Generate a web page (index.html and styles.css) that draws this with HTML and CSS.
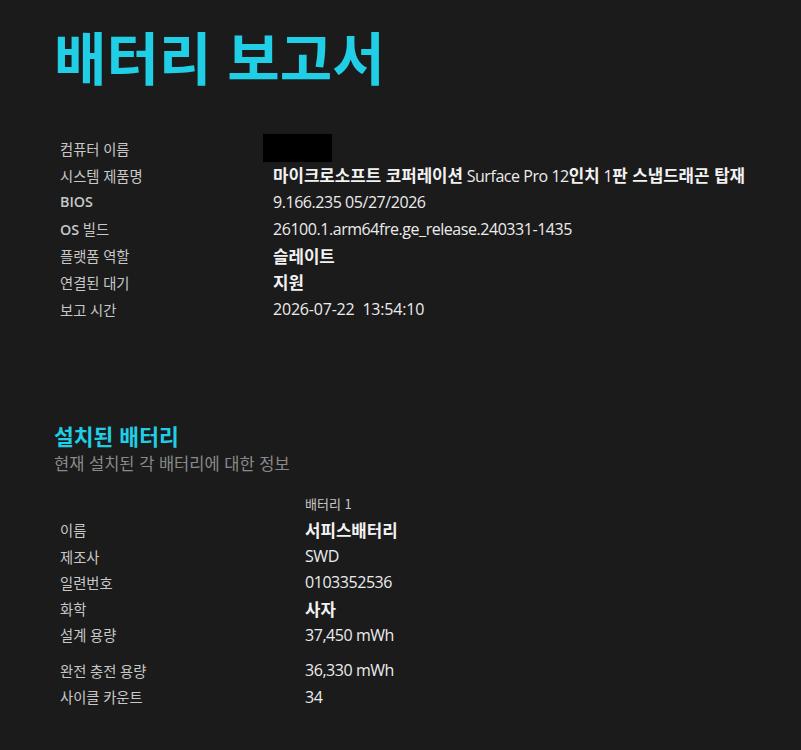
FILE: index.html
```html
<!DOCTYPE html>
<html lang="ko">
<head>
<meta charset="utf-8">
<link rel="stylesheet" href="styles.css">
</head>
<body>
<main class="page">
  <h1 class="title">배터리 보고서</h1>

  <section class="info">
    <div class="lbl">컴퓨터 이름</div><div class="val"><span class="redact"></span></div>
    <div class="lbl">시스템 제품명</div><div class="val"><b>마이크로소프트 코퍼레이션</b> Surface Pro 12<b>인치</b> 1<b>판 스냅드래곤 탑재</b></div>
    <div class="lbl"><span class="latin">BIOS</span></div><div class="val">9.166.235 05/27/2026</div>
    <div class="lbl"><span class="latin">OS</span> 빌드</div><div class="val">26100.1.arm64fre.ge_release.240331-1435</div>
    <div class="lbl">플랫폼 역할</div><div class="val"><b>슬레이트</b></div>
    <div class="lbl">연결된 대기</div><div class="val"><b>지원</b></div>
    <div class="lbl">보고 시간</div><div class="val time">2026-07-22&nbsp; 13:54:10</div>
  </section>

  <section class="batteries">
    <h2 class="sec-title">설치된 배터리</h2>
    <p class="sec-sub">현재 설치된 각 배터리에 대한 정보</p>

    <div class="btable">
      <div class="lbl"></div><div class="bhead">배터리 1</div>
      <div class="lbl">이름</div><div class="val"><b>서피스배터리</b></div>
      <div class="lbl">제조사</div><div class="val">SWD</div>
      <div class="lbl">일련번호</div><div class="val">0103352536</div>
      <div class="lbl">화학</div><div class="val"><b>사자</b></div>
      <div class="lbl">설계 용량</div><div class="val">37,450 mWh</div>
      <div class="spacer"></div>
      <div class="lbl">완전 충전 용량</div><div class="val">36,330 mWh</div>
      <div class="lbl">사이클 카운트</div><div class="val">34</div>
    </div>
  </section>
</main>
</body>
</html>
```

FILE: styles.css
```css
html, body {
  margin: 0;
  padding: 0;
  background: #1b1b1b;
}
body {
  font-family: "Open Sans", "Noto Sans CJK KR", sans-serif;
  color: #e6e6e6;
  height: 750px;
  overflow: hidden;
}
.page {
  padding: 15px 0 0 54px;
}
.title {
  margin: 0;
  font-family: "Noto Sans CJK KR", sans-serif;
  font-weight: 700;
  font-size: 57px;
  line-height: 80px;
  color: #20cfe5;
}
.info {
  margin-top: 40px;
  display: grid;
  grid-template-columns: 213px auto;
  grid-auto-rows: 26.8px;
  align-items: center;
  padding-left: 6px;
}
.lbl {
  font-size: 14.3px;
  color: #c8c8c8;
}
.lbl .latin {
  font-weight: 600;
}
.val {
  font-size: 16px;
  letter-spacing: -0.45px;
  color: #ececec;
}
.val b {
  font-weight: 700;
  font-family: "Noto Sans CJK KR", sans-serif;
  font-size: 16.8px;
  letter-spacing: 0;
  color: #f2f2f2;
}
.val.time {
  font-weight: 500;
  letter-spacing: -0.2px;
}
.redact {
  display: block;
  width: 69px;
  height: 28px;
  margin-left: -10px;
  background: #000;
}
.batteries {
  margin-top: 98px;
}
.sec-title {
  margin: 0;
  font-family: "Noto Sans CJK KR", sans-serif;
  font-size: 21.5px;
  font-weight: 700;
  line-height: 30px;
  color: #20cfe5;
}
.sec-sub {
  margin: 0;
  font-family: "Noto Sans CJK KR", sans-serif;
  font-size: 16.5px;
  line-height: 24px;
  color: #8a8a8a;
}
.btable {
  margin-top: 15px;
  padding-left: 6px;
  display: grid;
  grid-template-columns: 245px auto;
  grid-template-rows: 27px 26.3px 26.3px 26.3px 26.3px 26.3px 9px 26.3px 26.3px;
  align-items: center;
}
.spacer {
  grid-column: 1 / -1;
}
.bhead {
  font-family: "Noto Sans CJK KR", sans-serif;
  font-size: 13px;
  color: #c8c8c8;
}
```
